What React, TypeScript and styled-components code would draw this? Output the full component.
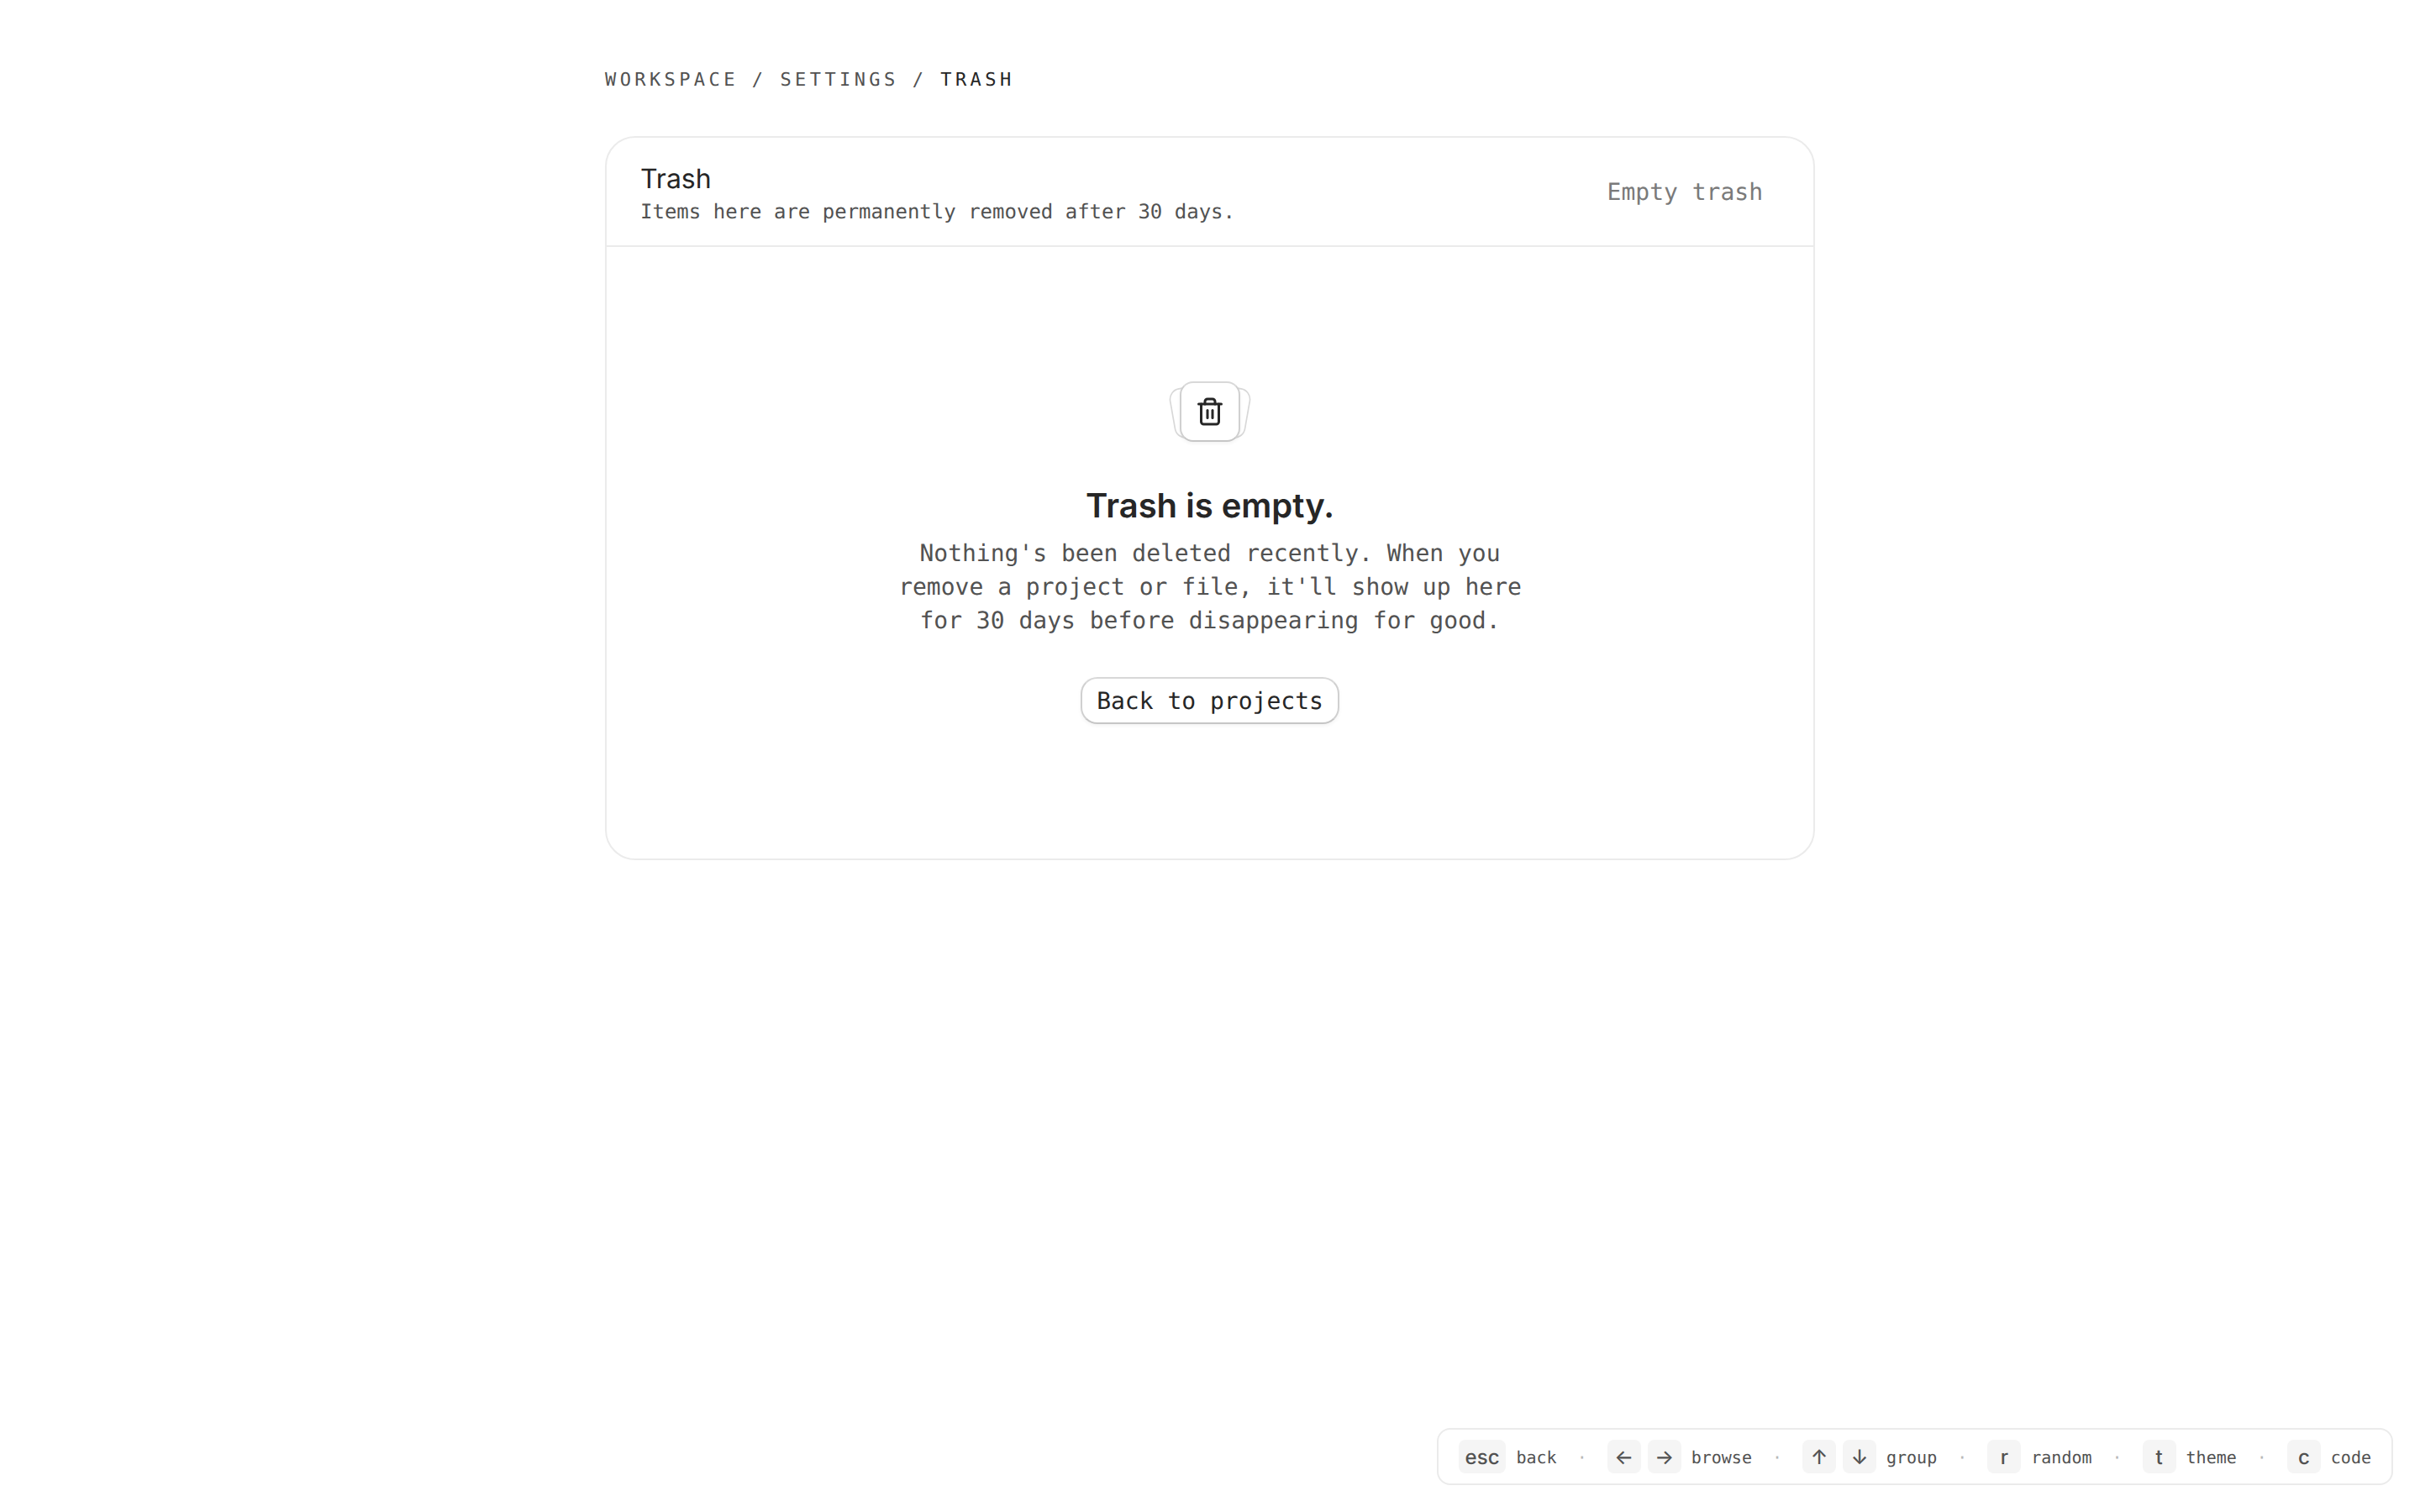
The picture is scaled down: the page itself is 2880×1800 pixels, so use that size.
import React from "react";
import styled, { createGlobalStyle } from "styled-components";
import { Trash2 } from "lucide-react";

const shortcuts = [
  { keys: ["esc"], label: "back" },
  { keys: ["←", "→"], label: "browse" },
  { keys: ["↑", "↓"], label: "group" },
  { keys: ["r"], label: "random" },
  { keys: ["t"], label: "theme" },
  { keys: ["c"], label: "code" },
];

export default function App() {
  return (
    <>
      <GlobalStyle />
      <Page>
        <Main>
          <Breadcrumb>
            <span>Workspace</span>
            <span>/</span>
            <span>Settings</span>
            <span>/</span>
            <Current>Trash</Current>
          </Breadcrumb>
          <Card>
            <CardHeader>
              <div>
                <CardTitle>Trash</CardTitle>
                <CardDescription>Items here are permanently removed after 30 days.</CardDescription>
              </div>
              <GhostButton disabled>Empty trash</GhostButton>
            </CardHeader>
            <Empty>
              <Media>
                <BackTile $side="left" />
                <BackTile $side="right" />
                <Tile>
                  <Trash2 size={36} strokeWidth={2} />
                </Tile>
              </Media>
              <EmptyTitle>Trash is empty.</EmptyTitle>
              <EmptyText>
                Nothing's been deleted recently. When you remove a project or file, it'll show up
                here for 30 days before disappearing for good.
              </EmptyText>
              <OutlineButton>Back to projects</OutlineButton>
            </Empty>
          </Card>
        </Main>
        <Footer>
          <ShortcutBar>
            {shortcuts.map(({ keys, label }, i) => (
              <React.Fragment key={label}>
                {i > 0 && <Dot>·</Dot>}
                <Shortcut>
                  <Keys>
                    {keys.map((key) => (
                      <Kbd key={key}>{key}</Kbd>
                    ))}
                  </Keys>
                  <Label>{label}</Label>
                </Shortcut>
              </React.Fragment>
            ))}
          </ShortcutBar>
        </Footer>
      </Page>
    </>
  );
}

const GlobalStyle = createGlobalStyle`
  :root {
    --sans: "Inter", "Liberation Sans", sans-serif;
    --mono: "DejaVu Sans Mono", "Liberation Mono", monospace;
    --foreground: #262626;
    --muted: #525252;
    --border: #ebebeb;
  }
  *, *::before, *::after {
    box-sizing: border-box;
  }
  body {
    margin: 0;
    background: #fff;
    color: var(--foreground);
    font-family: var(--mono);
    text-rendering: geometricPrecision;
  }
  h1, h2, p {
    margin: 0;
  }
`;

const Page = styled.div`
  display: flex;
  flex-direction: column;
  justify-content: space-between;
  min-height: 100vh;
`;

const Main = styled.main`
  width: 1440px;
  margin: 0 auto;
  padding-top: 81px;
`;

const Breadcrumb = styled.nav`
  display: flex;
  gap: 16px;
  margin-bottom: 52px;
  font-size: 22px;
  line-height: 29px;
  letter-spacing: 4.4px;
  text-transform: uppercase;
  color: var(--muted);
`;

const Current = styled.span`
  color: var(--foreground);
`;

const Card = styled.section`
  border: 2px solid var(--border);
  border-radius: 36px;
`;

const CardHeader = styled.header`
  display: flex;
  align-items: center;
  justify-content: space-between;
  height: 130px;
  padding: 0 40px;
  border-bottom: 2px solid var(--border);
`;

const CardTitle = styled.h1`
  font-family: var(--sans);
  font-size: 32px;
  font-weight: 400;
  line-height: 50px;
`;

const CardDescription = styled.p`
  font-size: 24px;
  line-height: 28px;
  margin-bottom: 2px;
  color: var(--muted);
`;

const Button = styled.button`
  height: 56px;
  padding: 2px 18px 0;
  border: 2px solid transparent;
  border-radius: 20px;
  background: none;
  color: var(--foreground);
  font-family: var(--mono);
  font-size: 28px;
  line-height: 40px;
  text-rendering: inherit;
  white-space: nowrap;
`;

const GhostButton = styled(Button)`
  color: #7a7a7a;
`;

const OutlineButton = styled(Button)`
  margin-top: 47px;
  padding: 2px 17px 0;
  border-color: #d8d8d8 #d0d0d0 #c6c6c6;
  background: #fff;
  box-shadow: 0 2px 4px rgba(0, 0, 0, 0.05);
`;

const Empty = styled.div`
  display: flex;
  flex-direction: column;
  align-items: center;
  padding: 160px 40px;
`;

const Media = styled.div`
  position: relative;
  width: 72px;
  height: 72px;
  margin-bottom: 48px;
`;

const Tile = styled.div`
  position: relative;
  display: flex;
  align-items: center;
  justify-content: center;
  width: 72px;
  height: 72px;
  border: 2px solid;
  border-color: #d8d8d8 #d0d0d0 #c6c6c6;
  border-radius: 16px;
  background: #fff;
  box-shadow: 0 2px 4px rgba(0, 0, 0, 0.05);
`;

const BackTile = styled.div<{ $side: "left" | "right" }>`
  position: absolute;
  bottom: 2px;
  left: 0;
  width: 72px;
  height: 72px;
  border: 2px solid #d8d8d8;
  border-radius: 16px;
  background: #fff;
  transform-origin: bottom ${({ $side }) => $side};
  transform: ${({ $side }) =>
    $side === "left"
      ? "translateX(-4px) rotate(-10deg) scale(0.84)"
      : "translateX(4px) rotate(10deg) scale(0.84)"};
`;

const EmptyTitle = styled.h2`
  font-family: var(--sans);
  font-size: 40px;
  font-weight: 600;
  line-height: 56px;
`;

const EmptyText = styled.p`
  width: 768px;
  margin-top: 9px;
  font-size: 28px;
  line-height: 40px;
  text-align: center;
  color: var(--muted);
`;

const Footer = styled.footer`
  display: flex;
  justify-content: flex-end;
  padding: 32px;
`;

const ShortcutBar = styled.div`
  display: flex;
  align-items: center;
  gap: 24px;
  height: 68px;
  padding: 0 24px;
  border: 2px solid var(--border);
  border-radius: 16px;
  background: #fff;
  color: var(--muted);
  font-size: 20px;
`;

const Shortcut = styled.div`
  display: flex;
  align-items: center;
  gap: 12px;
`;

const Keys = styled.div`
  display: flex;
  gap: 8px;
`;

const Kbd = styled.kbd`
  display: flex;
  align-items: center;
  justify-content: center;
  min-width: 40px;
  height: 40px;
  padding: 0 8px;
  border-radius: 8px;
  background: #f5f5f5;
  font-family: var(--sans);
  font-size: 24px;
  font-weight: 500;
`;

const Label = styled.span`
  padding-top: 2px;
`;

const Dot = styled.span`
  padding-top: 2px;
  color: #b8b8b8;
`;
